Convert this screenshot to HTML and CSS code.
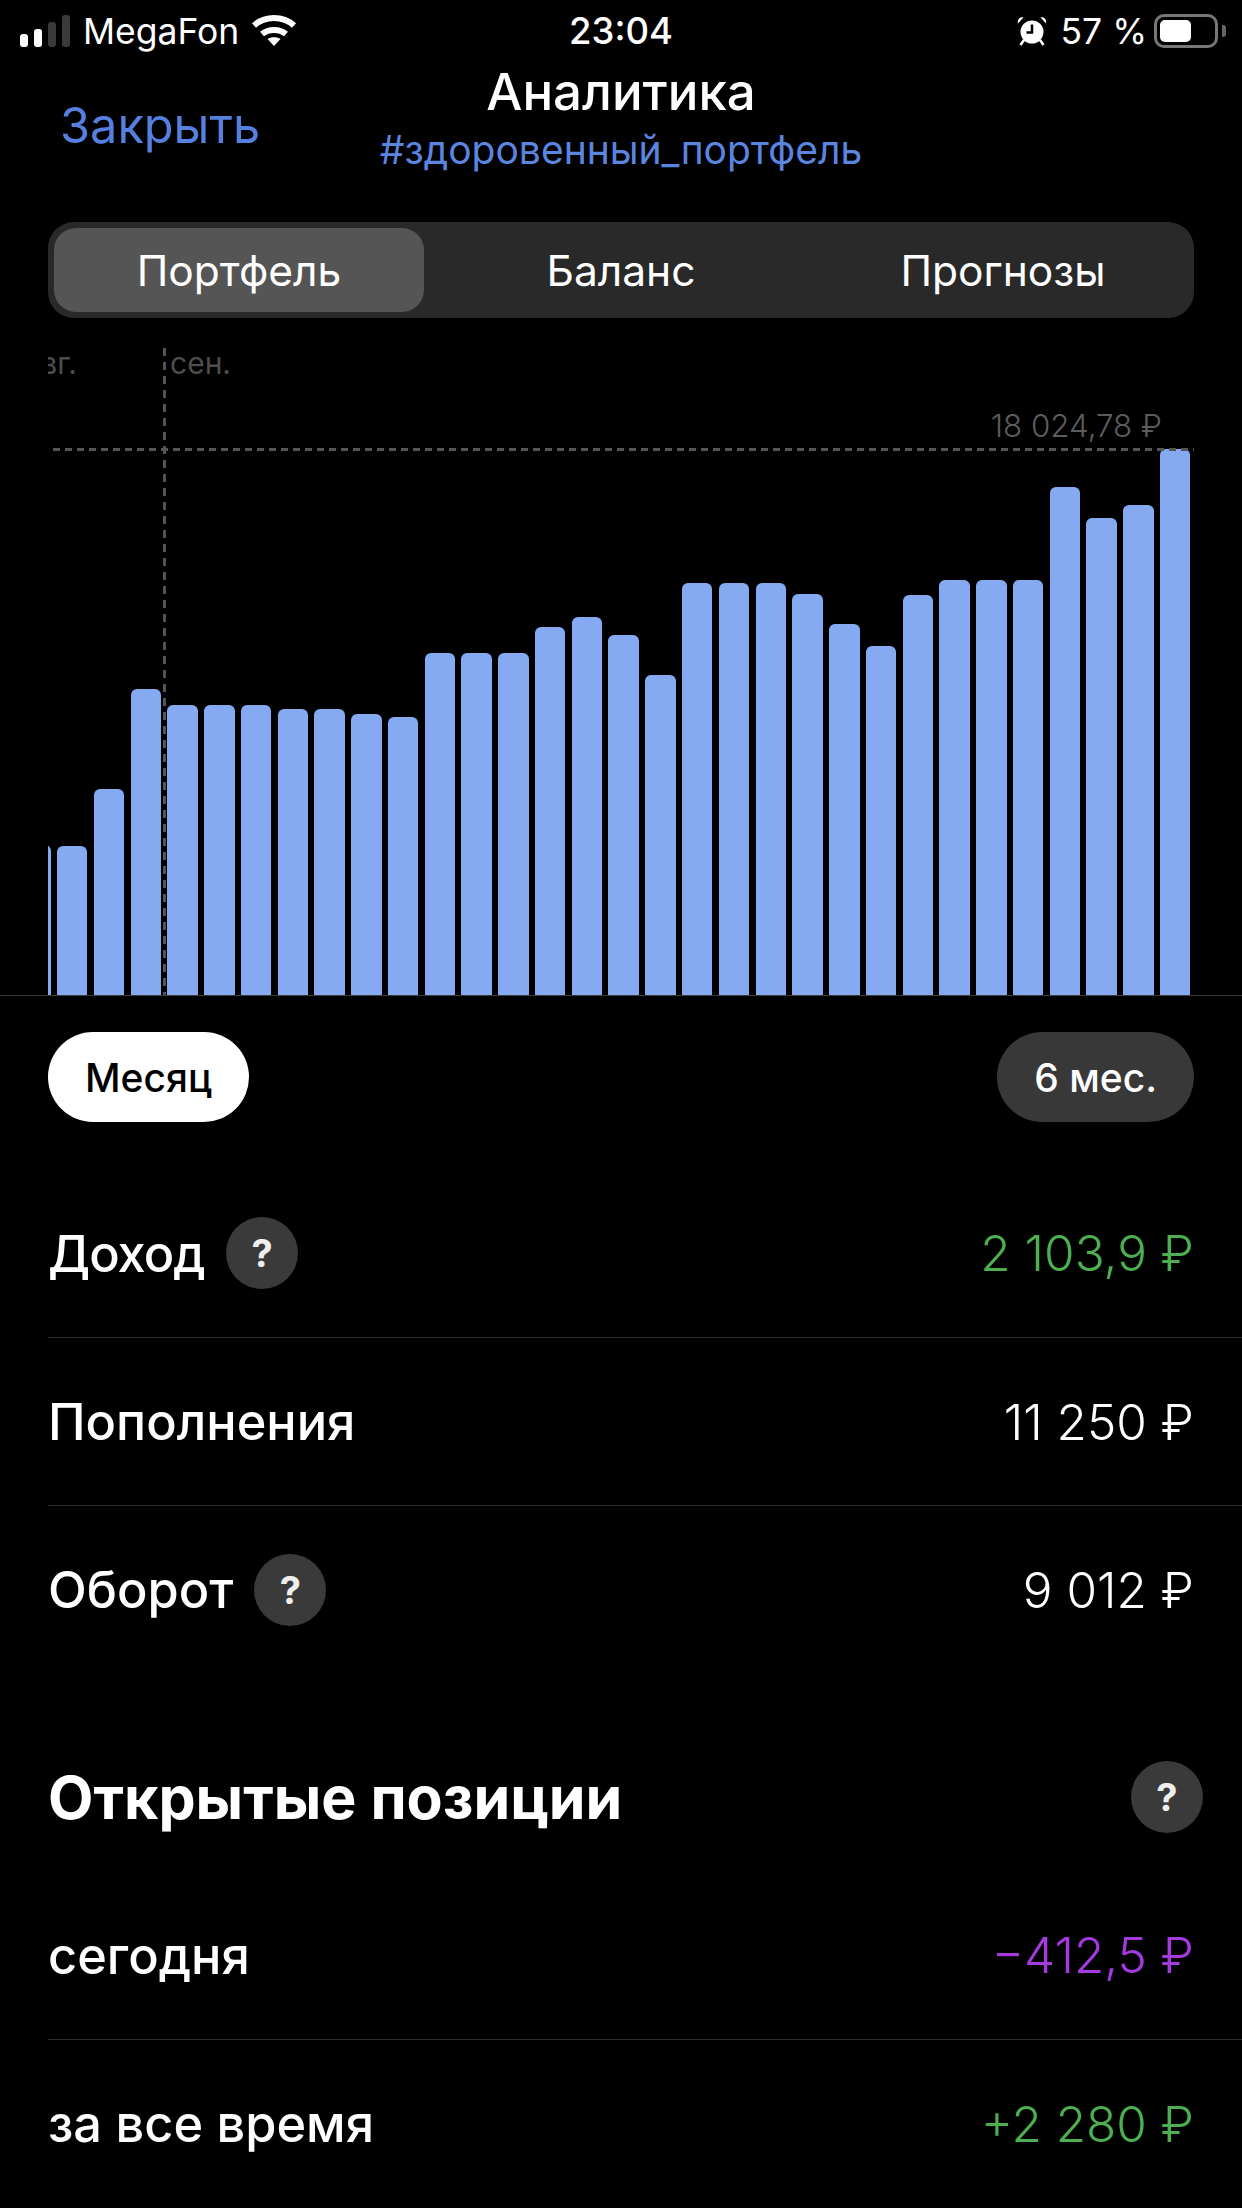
FILE: index.html
```html
<!DOCTYPE html>
<html lang="ru">
<head>
<meta charset="UTF-8" />
<title>Аналитика</title>
<link rel="stylesheet" href="styles.css">
</head>
<body>
  <div class="status">
    <div class="status-left">
      <div class="signal">
        <span class="sig sig1"></span>
        <span class="sig sig2"></span>
        <span class="sig sig3"></span>
        <span class="sig sig4"></span>
      </div>
      <span class="carrier">MegaFon</span>
      <svg class="wifi" viewBox="0 0 46 32" width="46" height="32">
        <path d="M3 11.500C14 1.500 32 1.500 43 11.500" fill="none" stroke="#fff" stroke-width="6"/>
        <path d="M11 20C17.500 14.500 28.500 14.500 35 20" fill="none" stroke="#fff" stroke-width="6"/>
        <path d="M16.500 25C20 22.500 26 22.500 29.500 25L23 32Z" fill="#fff"/>
      </svg>
    </div>
    <div class="clock">23:04</div>
    <div class="status-right">
      <svg class="alarm" viewBox="0 0 30 30" width="30" height="30">
        <circle cx="15" cy="16" r="11.500" fill="#fff"/>
        <path d="M15 8.500V16.500H9.500" fill="none" stroke="#000" stroke-width="2.500"/>
        <path d="M1 7.500L6.500 1.500C3 0.500 0 3.500 1 7.500ZM29 7.500L23.500 1.500C27 0.500 30 3.500 29 7.500Z" fill="#fff"/>
        <path d="M7 24L3.500 29M23 24L26.500 29" stroke="#fff" stroke-width="2.500"/>
      </svg>
      <span class="percent">57 %</span>
      <div class="battery"><div class="battery-fill"></div></div>
      <div class="battery-nub"></div>
    </div>
  </div>

  <header class="head">
    <a class="close-link">Закрыть</a>
    <div class="head-title">
      <div class="title">Аналитика</div>
      <div class="subtitle">#здоровенный_портфель</div>
    </div>
  </header>

  <div class="tabs">
    <div class="tab tab-active">Портфель</div>
    <div class="tab">Баланс</div>
    <div class="tab">Прогнозы</div>
  </div>

  <section class="chart">
    <div class="plot">
      <div class="bars">
        <div class="bar" style="height:150px"></div>
        <div class="bar" style="height:149px"></div>
        <div class="bar" style="height:206px"></div>
        <div class="bar" style="height:306px"></div>
        <div class="bar" style="height:290px"></div>
        <div class="bar" style="height:290px"></div>
        <div class="bar" style="height:290px"></div>
        <div class="bar" style="height:286px"></div>
        <div class="bar" style="height:286px"></div>
        <div class="bar" style="height:281px"></div>
        <div class="bar" style="height:278px"></div>
        <div class="bar" style="height:342px"></div>
        <div class="bar" style="height:342px"></div>
        <div class="bar" style="height:342px"></div>
        <div class="bar" style="height:368px"></div>
        <div class="bar" style="height:378px"></div>
        <div class="bar" style="height:360px"></div>
        <div class="bar" style="height:320px"></div>
        <div class="bar" style="height:412px"></div>
        <div class="bar" style="height:412px"></div>
        <div class="bar" style="height:412px"></div>
        <div class="bar" style="height:401px"></div>
        <div class="bar" style="height:371px"></div>
        <div class="bar" style="height:349px"></div>
        <div class="bar" style="height:400px"></div>
        <div class="bar" style="height:415px"></div>
        <div class="bar" style="height:415px"></div>
        <div class="bar" style="height:415px"></div>
        <div class="bar" style="height:508px"></div>
        <div class="bar" style="height:477px"></div>
        <div class="bar" style="height:490px"></div>
        <div class="bar" style="height:546px"></div>
      </div>
      <div class="month month-prev">авг.</div>
      <div class="month month-cur">сен.</div>
      <div class="vline"></div>
      <div class="hline"></div>
      <div class="max-label">18 024,78 ₽</div>
    </div>
  </section>

  <div class="periods">
    <div class="pill pill-on">Месяц</div>
    <div class="pill">6 мес.</div>
  </div>

  <section class="rows">
    <div class="row">
      <div class="row-name row-name-tight">Доход <span class="help">?</span></div>
      <div class="row-val green">2 103,9 ₽</div>
    </div>
    <div class="row">
      <div class="row-name">Пополнения</div>
      <div class="row-val">11 250 ₽</div>
    </div>
    <div class="row">
      <div class="row-name">Оборот <span class="help">?</span></div>
      <div class="row-val">9 012 ₽</div>
    </div>
  </section>

  <div class="section-head">
    <h2>Открытые позиции</h2>
    <span class="help">?</span>
  </div>

  <section class="rows">
    <div class="row">
      <div class="row-name">сегодня</div>
      <div class="row-val purple">−412,5 ₽</div>
    </div>
    <div class="row">
      <div class="row-name">за все время</div>
      <div class="row-val green">+2 280 ₽</div>
    </div>
  </section>
</body>
</html>
```

FILE: styles.css
```css
body {
  margin: 0;
  width: 1242px;
  height: 2208px;
  overflow: hidden;
  background: #000;
  color: #fff;
  font-family: Inter, Roboto, sans-serif;
}

/* status bar */
.status {
  display: grid;
  grid-template-columns: 1fr auto 1fr;
  align-items: center;
  height: 62px;
  padding: 0 16px;
  font-size: 35.500px;
}
.status-left {
  display: flex;
  align-items: center;
}
.signal {
  display: flex;
  align-items: flex-end;
  gap: 6px;
  height: 32px;
  margin: 0 13px 0 4px;
}
.sig {
  width: 8px;
  border-radius: 3px;
  background: #fff;
}
.sig1 { height: 13px; }
.sig2 { height: 18px; }
.sig3 { height: 25px; background: #3a3a3a; }
.sig4 { height: 32px; background: #3a3a3a; }
.wifi {
  margin-left: 12px;
  margin-top: -2px;
}
.clock {
  font-weight: 500;
  font-size: 36.500px;
}
.status-right {
  display: flex;
  align-items: center;
  justify-content: flex-end;
}
.alarm {
  margin-right: 13px;
}
.percent {
  margin-right: 7px;
}
.battery {
  box-sizing: border-box;
  width: 64px;
  height: 34px;
  padding: 3px;
  border: 3px solid #777;
  border-radius: 10px;
}
.battery-fill {
  width: 31px;
  height: 22px;
  background: #fff;
  border-radius: 5px;
}
.battery-nub {
  width: 4px;
  height: 12px;
  margin-left: 4px;
  background: #666;
  border-radius: 0 3px 3px 0;
}

/* header */
.head {
  display: grid;
  grid-template-columns: 1fr auto 1fr;
  height: 160px;
}
.close-link {
  padding: 36px 0 0 60px;
  font-size: 48.700px;
  line-height: 56px;
  color: #5580e0;
}
.head-title {
  text-align: center;
}
.title {
  font-size: 51px;
  font-weight: 500;
  line-height: 60px;
}
.subtitle {
  font-size: 39px;
  line-height: 44px;
  margin-top: 6px;
  color: #5b86e0;
}

/* tabs */
.tabs {
  display: grid;
  grid-template-columns: 370px 1fr 370px;
  height: 96px;
  margin: 0 48px;
  padding: 6px;
  box-sizing: border-box;
  background: #292929;
  border-radius: 26px;
}
.tab {
  display: flex;
  align-items: center;
  justify-content: center;
  font-size: 42.500px;
}
.tab-active {
  background: #555;
  border-radius: 22px;
}

/* chart */
.chart {
  padding: 0 48px;
  border-bottom: 1px solid #3a3a3a;
}
.plot {
  position: relative;
  height: 677px;
  overflow: hidden;
}
.bars {
  display: flex;
  align-items: flex-end;
  gap: 6.27px;
  height: 100%;
  margin-left: -27.8px;
}
.bar {
  flex: none;
  width: 30.5px;
  background: #85aaf2;
  border-radius: 6px 6px 0 0;
}
.month {
  position: absolute;
  top: 25px;
  font-size: 30px;
  line-height: 40px;
  color: #4d4d4d;
}
.month-prev {
  right: 1117px;
}
.month-cur {
  left: 122px;
}
.vline {
  position: absolute;
  left: 115px;
  top: 30px;
  bottom: 0;
  width: 3px;
  background: repeating-linear-gradient(to bottom, #555 0 8px, transparent 8px 14px);
}
.hline {
  position: absolute;
  left: 5px;
  right: 0;
  top: 130px;
  height: 3px;
  background: repeating-linear-gradient(to right, #555 0 7px, transparent 7px 12px);
}
.max-label {
  position: absolute;
  right: 32px;
  top: 90px;
  font-size: 31.300px;
  line-height: 36px;
  font-weight: 300;
  color: #5c5c5c;
}

/* period switch */
.periods {
  display: flex;
  justify-content: space-between;
  margin: 36px 48px 47px;
}
.pill {
  display: flex;
  align-items: center;
  height: 90px;
  padding: 0 37px;
  border-radius: 45px;
  background: #383838;
  font-size: 39px;
  font-weight: 500;
}
.pill-on {
  background: #fff;
  color: #000;
}

/* rows */
.row {
  display: flex;
  align-items: center;
  justify-content: space-between;
  box-sizing: border-box;
  height: 168px;
  margin-left: 48px;
  padding-right: 48px;
}
.row + .row {
  border-top: 1px solid #2e2e2e;
}
.row-name {
  display: flex;
  align-items: center;
  gap: 21px;
  font-size: 50.500px;
  font-weight: 500;
}
.row-name-tight {
  letter-spacing: -1px;
}
.row-val {
  font-size: 49.500px;
  font-weight: 300;
}
.green { color: #4caf50; }
.purple { color: #a53ae0; }
.help {
  display: flex;
  align-items: center;
  justify-content: center;
  width: 72px;
  height: 72px;
  border-radius: 50%;
  background: #3a3a3a;
  font-size: 38px;
  font-weight: 700;
  color: #eee;
}
.section-head {
  display: flex;
  align-items: center;
  justify-content: space-between;
  padding: 88px 39px 38px 48px;
}
.section-head h2 {
  margin: 0;
  font-size: 59px;
  font-weight: 700;
}
```
